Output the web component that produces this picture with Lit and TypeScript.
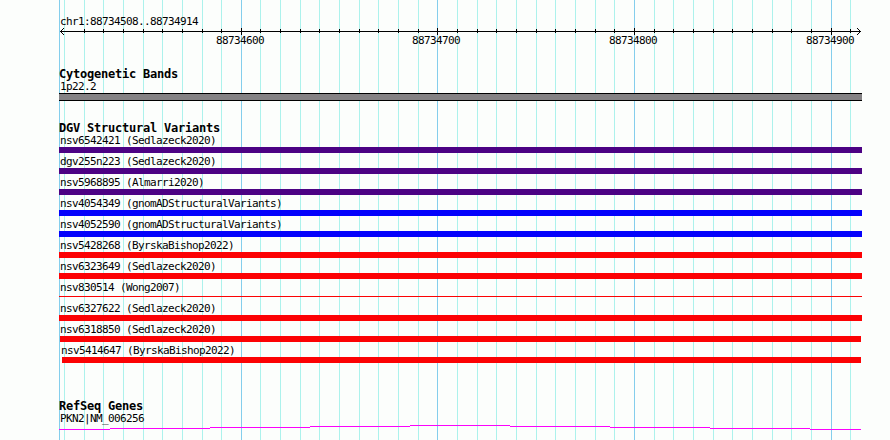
import {html, svg, css, LitElement} from 'lit';
import {customElement, property} from 'lit/decorators.js';
import {styleMap} from 'lit/directives/style-map.js';

interface Variant {
  label: string;
  color: string;
  // pixels cut off at the left and right end of the track
  start?: number;
  end?: number;
  thin?: boolean;
}

const INDIGO = '#4c0284';
const BLUE = '#0402fc';
const RED = '#fc0204';

// x of each grid line, every tenth one is labelled
const MINOR = [
  64, 84, 103, 123, 143, 162, 182, 202, 221, 260, 280, 300, 319, 339, 359, 378, 398, 418, 457, 477,
  496, 516, 536, 555, 575, 595, 614, 654, 673, 693, 713, 732, 752, 772, 791, 811, 850
];
const MAJOR = [241, 437, 634, 831];

@customElement('gb-grid')
export class Grid extends LitElement {
  static styles = css`
    svg {
      display: block;
      shape-rendering: crispEdges;
    }
    .minor {
      fill: #acf2ec;
    }
    .major {
      fill: #84ceec;
    }
  `;

  render() {
    return html`
      <svg width="890" height="440">
        ${MINOR.map(x => svg`<rect class="minor" x=${x} y="0" width="1" height="440" />`)}
        ${[59, ...MAJOR].map(x => svg`<rect class="major" x=${x} y="0" width="1" height="440" />`)}
      </svg>
    `;
  }
}

@customElement('gb-ruler')
export class Ruler extends LitElement {
  static styles = css`
    :host {
      display: block;
    }
    svg {
      display: block;
      shape-rendering: crispEdges;
    }
    .numbers {
      display: flex;
      gap: 149px;
      height: 14px;
      padding-left: 157px;
      line-height: 10px;
      white-space: nowrap;
    }
    .numbers span {
      width: 48px;
    }
    .numbers span:first-child {
      margin-right: -1px;
    }
  `;

  render() {
    return html`
      <svg width="803" height="9" viewBox="59 27 803 9">
        <rect x="60" y="31" width="801" height="1" />
        ${[0, 1, 2, 3].map(
          i => svg`
            <rect x=${60 + i} y=${31 - i} width="1" height="1" />
            <rect x=${60 + i} y=${31 + i} width="1" height="1" />
            <rect x=${860 - i} y=${31 - i} width="1" height="1" />
            <rect x=${860 - i} y=${31 + i} width="1" height="1" />
          `
        )}
        ${MINOR.filter(x => x > 64).map(x => svg`<rect x=${x} y="29" width="1" height="4" />`)}
        ${MAJOR.map(x => svg`<rect x=${x} y="28" width="1" height="7" />`)}
      </svg>
      <div class="numbers">
        ${[88734600, 88734700, 88734800, 88734900].map(n => html`<span>${n}</span>`)}
      </div>
    `;
  }
}

@customElement('gb-variant')
export class VariantRow extends LitElement {
  static styles = css`
    :host {
      display: block;
      height: 21px;
    }
    .label {
      height: 15px;
      line-height: 18px;
      padding-left: 1px;
      white-space: nowrap;
    }
    .bar {
      height: 6px;
    }
    .thin {
      height: 1px;
      margin-top: 2px;
    }
  `;

  @property({attribute: false})
  variant!: Variant;

  render() {
    const {label, color, start = 0, end = 0, thin} = this.variant;
    const shift = start > 1 ? 1 : 0;
    return html`
      <div class="label" style=${styleMap({marginLeft: `${shift}px`})}>${label}</div>
      <div
        class="bar ${thin ? 'thin' : ''}"
        style=${styleMap({background: color, marginLeft: `${start}px`, marginRight: `${end}px`})}
      ></div>
    `;
  }
}

@customElement('gb-gene')
export class Gene extends LitElement {
  static styles = css`
    :host {
      display: block;
    }
    svg {
      display: block;
      shape-rendering: crispEdges;
    }
    rect {
      fill: #fc02fc;
    }
  `;

  // the intron line is a very flat hat, one step per segment
  segments = [
    [59, 110, 429],
    [110, 210, 428],
    [210, 310, 427],
    [310, 410, 426],
    [410, 510, 425],
    [510, 610, 426],
    [610, 710, 427],
    [710, 810, 428],
    [810, 861, 429]
  ];

  render() {
    return html`
      <svg width="803" height="6" viewBox="59 425 803 6">
        ${this.segments.map(([from, to, y]) => svg`<rect x=${from} y=${y} width=${to - from} height="1" />`)}
      </svg>
    `;
  }
}

@customElement('app-root')
export class App extends LitElement {
  static styles = css`
    :host {
      display: block;
      position: relative;
      width: 890px;
      height: 440px;
      overflow: hidden;
      background: #fcfefc;
      color: #000;
      font-family: 'DejaVu Sans Mono', monospace;
      font-size: 11px;
      letter-spacing: -0.622px;
    }
    gb-grid {
      position: absolute;
      inset: 0;
    }
    .tracks {
      position: relative;
      box-sizing: border-box;
      width: 862px;
      padding: 14px 0 0 59px;
    }
    .region,
    .label {
      padding-left: 1px;
      white-space: nowrap;
    }
    .region {
      height: 13px;
      line-height: 16px;
    }
    h2 {
      margin: 0;
      height: 14px;
      line-height: 14px;
      font-size: 12px;
      font-weight: bold;
      letter-spacing: -0.224px;
      white-space: nowrap;
    }
    .bands {
      padding-top: 17px;
    }
    .bands .label {
      height: 12px;
      line-height: 12px;
    }
    .band {
      box-sizing: border-box;
      height: 8px;
      border: solid #000;
      border-width: 1px 0;
      background: #848284;
    }
    .variants {
      padding-top: 20px;
    }
    .variants h2 {
      height: 11px;
    }
    .genes {
      padding-top: 36px;
    }
    .genes .label {
      height: 12px;
      line-height: 12px;
    }
  `;

  variants: Variant[] = [
    {label: 'nsv6542421 (Sedlazeck2020)', color: INDIGO},
    {label: 'dgv255n223 (Sedlazeck2020)', color: INDIGO},
    {label: 'nsv5968895 (Almarri2020)', color: INDIGO},
    {label: 'nsv4054349 (gnomADStructuralVariants)', color: BLUE},
    {label: 'nsv4052590 (gnomADStructuralVariants)', color: BLUE},
    {label: 'nsv5428268 (ByrskaBishop2022)', color: RED},
    {label: 'nsv6323649 (Sedlazeck2020)', color: RED},
    {label: 'nsv830514 (Wong2007)', color: RED, thin: true},
    {label: 'nsv6327622 (Sedlazeck2020)', color: RED},
    {label: 'nsv6318850 (Sedlazeck2020)', color: RED, start: 1, end: 1},
    {label: 'nsv5414647 (ByrskaBishop2022)', color: RED, start: 3, end: 1}
  ];

  render() {
    return html`
      <gb-grid></gb-grid>
      <div class="tracks">
        <div class="region">chr1:88734508..88734914</div>
        <gb-ruler></gb-ruler>
        <div class="bands">
          <h2>Cytogenetic Bands</h2>
          <div class="label">1p22.2</div>
          <div class="band"></div>
        </div>
        <div class="variants">
          <h2>DGV Structural Variants</h2>
          ${this.variants.map(v => html`<gb-variant .variant=${v}></gb-variant>`)}
        </div>
        <div class="genes">
          <h2>RefSeq Genes</h2>
          <div class="label">PKN2|NM_006256</div>
          <gb-gene></gb-gene>
        </div>
      </div>
    `;
  }
}
